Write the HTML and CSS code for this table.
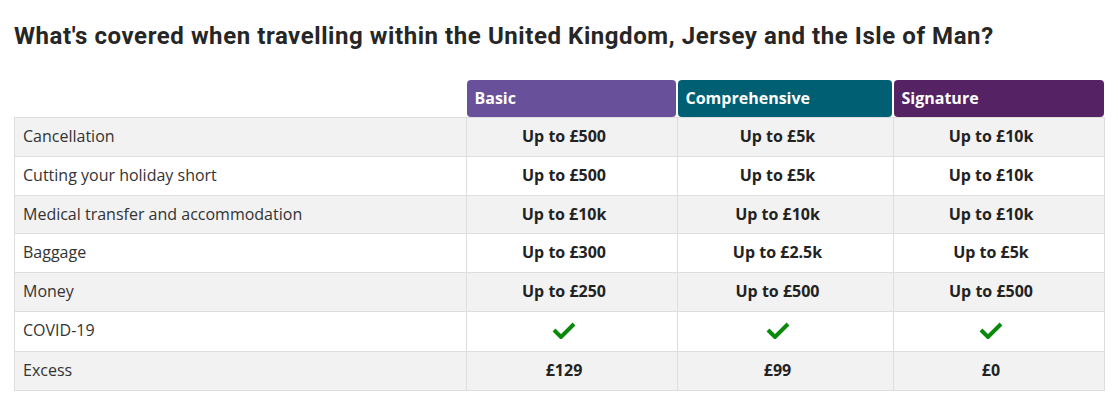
FILE: index.html
```html
<!DOCTYPE html>
<html lang="en">
<head>
<meta charset="utf-8">
<title>Cover comparison</title>
<link rel="stylesheet" href="styles.css">
</head>
<body>
<main class="page">
  <h2 class="title">What's covered when travelling within the United Kingdom, Jersey and the Isle of Man?</h2>
  <table class="cover">
    <colgroup>
      <col class="col-label">
      <col class="col-basic">
      <col class="col-comp">
      <col class="col-sig">
    </colgroup>
    <thead>
      <tr>
        <th class="blank"></th>
        <th><div class="tier tier-basic">Basic</div></th>
        <th><div class="tier tier-comp">Comprehensive</div></th>
        <th class="last"><div class="tier tier-sig">Signature</div></th>
      </tr>
    </thead>
    <tbody>
      <tr><td>Cancellation</td><td>Up to £500</td><td>Up to £5k</td><td>Up to £10k</td></tr>
      <tr><td>Cutting your holiday short</td><td>Up to £500</td><td>Up to £5k</td><td>Up to £10k</td></tr>
      <tr><td>Medical transfer and accommodation</td><td>Up to £10k</td><td>Up to £10k</td><td>Up to £10k</td></tr>
      <tr><td>Baggage</td><td>Up to £300</td><td>Up to £2.5k</td><td>Up to £5k</td></tr>
      <tr><td>Money</td><td>Up to £250</td><td>Up to £500</td><td>Up to £500</td></tr>
      <tr class="check-row">
        <td>COVID-19</td>
        <td><svg class="tick" viewBox="0 0 24 18" width="24" height="18"><path d="M2 9 L9 16 L22 3" fill="none" stroke="#0a8a0a" stroke-width="4" stroke-linejoin="miter"/></svg></td>
        <td><svg class="tick" viewBox="0 0 24 18" width="24" height="18"><path d="M2 9 L9 16 L22 3" fill="none" stroke="#0a8a0a" stroke-width="4" stroke-linejoin="miter"/></svg></td>
        <td><svg class="tick" viewBox="0 0 24 18" width="24" height="18"><path d="M2 9 L9 16 L22 3" fill="none" stroke="#0a8a0a" stroke-width="4" stroke-linejoin="miter"/></svg></td>
      </tr>
      <tr><td>Excess</td><td>£129</td><td>£99</td><td>£0</td></tr>
    </tbody>
  </table>
</main>
</body>
</html>
```

FILE: styles.css
```css
html, body {
  margin: 0;
  padding: 0;
  background: #ffffff;
}

.page {
  padding: 0 14px;
}

.title {
  margin: 0;
  padding-top: 21px;
  height: 80px;
  box-sizing: border-box;
  font-family: "Roboto", "Liberation Sans", sans-serif;
  font-weight: 700;
  font-size: 24px;
  line-height: 30px;
  color: #262626;
  letter-spacing: 0.57px;
}

.cover {
  width: 1090px;
  border-collapse: collapse;
  table-layout: fixed;
  font-family: "Open Sans", "Liberation Sans", sans-serif;
  font-size: 16px;
  color: #333333;
}

.col-label { width: 452px; }
.col-basic { width: 211px; }
.col-comp { width: 216px; }
.col-sig { width: 211px; }

.cover th {
  padding: 0 2px 0 0;
  height: 37px;
  vertical-align: top;
  text-align: left;
}

.cover th.blank {
  padding: 0;
}

.cover th.last {
  padding-right: 1px;
}

.tier {
  height: 37px;
  box-sizing: border-box;
  padding: 0 8px;
  border-radius: 4px;
  color: #ffffff;
  font-weight: 700;
  font-size: 16px;
  line-height: 37px;
}

.tier-basic { background: #68519a; }
.tier-comp { background: #005f73; }
.tier-sig { background: #552364; }

.cover td {
  border: 1px solid #dedede;
  padding: 8px 24px 8px 8px;
  line-height: 21.8px;
  text-align: center;
  font-weight: 700;
  color: #222222;
}

.cover td:first-child {
  text-align: left;
  font-weight: 400;
  color: #333333;
}

.cover tbody tr:nth-child(odd) td {
  background: #f2f2f2;
}

.cover tbody tr:nth-child(even) td {
  background: #ffffff;
}

.check-row td {
  padding-top: 8px;
  padding-bottom: 9px;
}

.tick {
  display: block;
  margin: 1px auto 2px;
}
```
